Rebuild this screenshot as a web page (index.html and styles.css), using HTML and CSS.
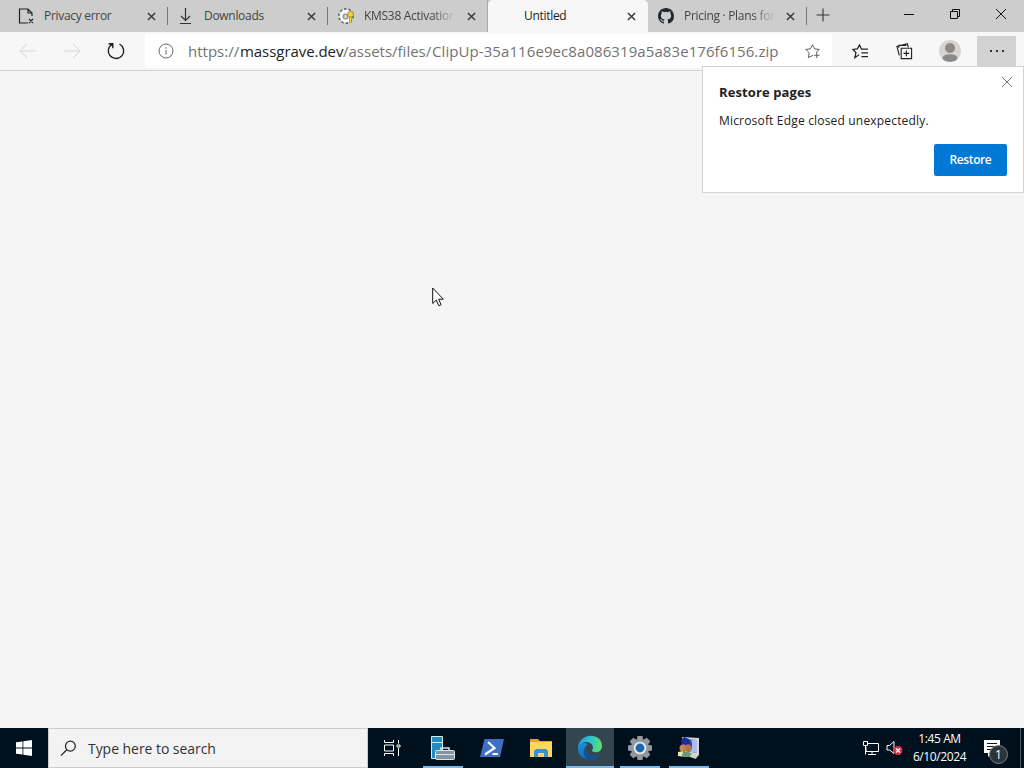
FILE: index.html
```html
<!DOCTYPE html>
<html lang="en">
<head>
    <meta charset="utf-8">
    <title>Untitled</title>
    <link rel="stylesheet" href="styles.css">
</head>
<body>
    <div class="tabs">
        <div class="tab">
            <svg class="fav" viewBox="0 0 16 16"><path d="M14 8V5L10 1H1.500v14H10M10 1v4h4M11 11l4 4M15 11l-4 4" fill="none" stroke="#222" stroke-width="1.200"/></svg>
            <span class="name">Privacy error</span>
            <svg class="x" viewBox="0 0 10 10"><path d="M1 1l8 8M9 1L1 9"/></svg>
        </div>
        <div class="tab">
            <svg class="fav" viewBox="0 0 16 16"><path d="M7.500 0v12M3 8l4.500 4.500L12 8M2 15.500h11" fill="none" stroke="#333" stroke-width="1.200"/></svg>
            <span class="name">Downloads</span>
            <svg class="x" viewBox="0 0 10 10"><path d="M1 1l8 8M9 1L1 9"/></svg>
        </div>
        <div class="tab">
            <svg class="fav" viewBox="0 0 16 16">
                <circle cx="8" cy="8" r="7" fill="#f5f5f5" stroke="#666" stroke-width="2" stroke-dasharray="2.400 2"/>
                <circle cx="8" cy="8" r="6.300" fill="#f7f7f7"/><circle cx="7.500" cy="8.500" r="2.500" fill="#cfcfcf" stroke="#777"/>
                <circle cx="12.500" cy="6.500" r="3" fill="#f4d03b" stroke="#8c6d16" stroke-width=".7"/><path d="M11.500 9h2v5l-1 1-1-1z" fill="#f4c93b" stroke="#8c6d16" stroke-width=".5"/>
            </svg>
            <span class="name fade">KMS38 Activation</span>
            <svg class="x" viewBox="0 0 10 10"><path d="M1 1l8 8M9 1L1 9"/></svg>
        </div>
        <div class="tab active">
            <span class="fav"></span>
            <span class="name">Untitled</span>
            <svg class="x" viewBox="0 0 10 10"><path d="M1 1l8 8M9 1L1 9"/></svg>
        </div>
        <div class="tab">
            <svg class="fav" viewBox="0 0 16 16"><path fill="#24292e" d="M8 0C3.580 0 0 3.580 0 8c0 3.540 2.290 6.530 5.470 7.590.4.070.55-.17.55-.38 0-.19-.01-.82-.01-1.490-2.010.37-2.530-.49-2.690-.94-.09-.23-.48-.94-.82-1.130-.28-.15-.68-.52-.01-.53.63-.01 1.080.58 1.230.82.72 1.210 1.870.87 2.330.66.070-.52.28-.87.51-1.070-1.780-.2-3.640-.89-3.640-3.950 0-.87.31-1.590.82-2.150-.08-.2-.36-1.020.08-2.120 0 0 .67-.21 2.200.82a7.600 7.600 0 0 1 4 0c1.530-1.040 2.200-.82 2.200-.82.44 1.100.16 1.920.08 2.120.51.56.82 1.270.82 2.150 0 3.070-1.870 3.750-3.650 3.950.29.25.54.73.54 1.480 0 1.070-.01 1.930-.01 2.200 0 .21.15.46.55.38A8 8 0 0 0 16 8c0-4.420-3.580-8-8-8z"/></svg>
            <span class="name fade">Pricing · Plans for</span>
            <svg class="x" viewBox="0 0 10 10"><path d="M1 1l8 8M9 1L1 9"/></svg>
        </div>
        <svg class="plus" viewBox="0 0 14 14"><path d="M7 .5v13M.5 7h13"/></svg>
        <div class="winbuttons">
            <svg viewBox="0 0 12 12"><path d="M1 6.500h10"/></svg>
            <svg viewBox="0 0 12 12"><path d="M1.500 3.500h7v7h-7zM3.500 3.500v-2h7v7h-2"/></svg>
            <svg viewBox="0 0 12 12"><path d="M1 1l10 10M11 1L1 11"/></svg>
        </div>
    </div>

    <div class="toolbar">
        <div class="nav">
            <svg class="off" viewBox="0 0 18 18"><path d="M17 9H1M8 2L1 9l7 7"/></svg>
            <svg class="off" viewBox="0 0 18 18"><path d="M1 9h16M10 2l7 7-7 7"/></svg>
            <svg viewBox="0 0 18 18"><path d="M12.500 2a7.700 7.700 0 1 1-7.200.1M1.500 1.800h4.300v4.400" stroke-width="1.400"/></svg>
        </div>
        <div class="address">
            <svg class="info" viewBox="0 0 16 16"><circle cx="8" cy="8" r="7"/><path d="M8 7v4.500M8 4.300v1.400"/></svg>
            <div class="url"><span class="scheme">https://</span><span class="host">massgrave.dev</span><span class="path">/assets/files/</span><span class="file">ClipUp-35a116e9ec8a086319a5a83e176f6156.zip</span></div>
            <svg class="star" viewBox="0 0 16 16"><path d="M8.500 12L3.500 14.500l1-5.200L.8 5.800l5-.6L8 .8l2.200 4.400 5 .6-3.500 3.300M12.500 9v6M9.500 12h6"/></svg>
        </div>
        <div class="actions">
            <svg viewBox="0 0 18 16"><path d="M7.500 11.500L3 14.500l1.200-5.200L1 5.800l4.700-.6L8 1l2 4.500h7M10 9.500h7M10 13.500h7" stroke-width="1.300"/></svg>
            <svg viewBox="0 0 18 18"><path d="M5.500 5.500h11v11h-11zM11 8v6M8 11h6M3.500 13L1 3.500l11-2.700 1 3.700M3 5V2.500h8" stroke-width="1.200"/></svg>
            <svg class="avatar" viewBox="0 0 22 22"><circle cx="11" cy="11" r="11" fill="#d6d4d2"/><circle cx="11" cy="8" r="5" fill="#8b8987"/><ellipse cx="11" cy="18" rx="7.500" ry="3.800" fill="#8b8987"/></svg>
            <div class="more"><svg viewBox="0 0 16 4"><path d="M1 1h2v2H1zM7 1h2v2H7zM13 1h2v2h-2z" fill="#333" stroke="none"/></svg></div>
        </div>
    </div>

    <div class="page">
        <div class="restore">
            <div class="title">Restore pages</div>
            <div class="text">Microsoft Edge closed unexpectedly.</div>
            <button>Restore</button>
            <svg class="dismiss" viewBox="0 0 12 12"><path d="M1 1l10 10M11 1L1 11"/></svg>
        </div>
        <svg class="cursor" viewBox="0 0 12 20"><path d="M.7 1v15.500l3.600-3.400 2.500 5.600 2.300-1-2.500-5.500h4.700z" fill="#fff" stroke="#111"/></svg>
    </div>

    <div class="taskbar">
        <div class="start"><svg viewBox="0 0 16 16"><path fill="#fff" d="M0 2.300L6.500 1.400v6.200H0zM7.300 1.300L16 0v7.600H7.300zM0 8.400h6.500v6.200L0 13.700zM7.300 8.400H16V16l-8.700-1.300z"/></svg></div>
        <div class="search">
            <svg viewBox="0 0 18 18"><circle cx="11" cy="6.500" r="5.200"/><path d="M7.200 10.300L1 16.500"/></svg>
            <span>Type here to search</span>
        </div>
        <div class="apps">
            <div class="app"><svg class="view" viewBox="0 0 18 16"><path d="M1.500 0v2.500h9V0M1.500 16v-2.500h9V16M1.500 5h9v6h-9zM15.500 0v3.500M15.500 8v8M14 5h3v2h-3z" fill="none" stroke="#fff"/></svg></div>
            <div class="app run"><svg viewBox="0 0 24 24"><path fill="#258bbd" stroke="#c8edfa" d="M.5.500h11v22H.5z"/><path d="M1 6.500h10" stroke="#c8edfa"/><path d="M10 15v-3h8v3" fill="none" stroke="#d8e2e8" stroke-width="1.500"/><rect x="4.500" y="14.500" width="19" height="9" rx="1" fill="#8295a2" stroke="#d8e2e8"/><path d="M5 18.500h18" stroke="#dce5e9"/></svg></div>
            <div class="app"><svg viewBox="0 0 24 24"><path fill="#3f6fc5" d="M4.500 3H24l-4 18H0z"/><path d="M8 6l6.500 6L5 18.500M12.500 18H18" fill="none" stroke="#fff" stroke-width="2.200"/></svg></div>
            <div class="app"><svg viewBox="0 0 24 24"><path fill="#e9a321" d="M1 3h8l2 2h12v4H1z"/><path fill="#ffd65e" d="M1 6h22v15H1z"/><path fill="#3794d2" d="M5 21v-6l2-2h10l2 2v6h-4v-4H9v4z"/></svg></div>
            <div class="app run current"><svg viewBox="0 0 24 24">
                <defs>
                    <linearGradient id="top" x1="0" y1=".4" x2="1" y2=".5"><stop offset="0" stop-color="#219bdd"/><stop offset=".55" stop-color="#31c7c8"/><stop offset="1" stop-color="#61df62"/></linearGradient>
                    <linearGradient id="side" x1="0" y1="0" x2=".5" y2="1"><stop offset="0" stop-color="#1c91dc"/><stop offset="1" stop-color="#1265b5"/></linearGradient>
                </defs>
                <path fill="url(#side)" d="M0 12C0 6 6 6 10 8c-4 3-3 9 2 11 4 1.700 8 .7 10-.5C17 26 0 26 0 12z"/>
                <path fill="#134f91" d="M9 10c-4 5 0 12 13 8.500-3 5-8 6-12 5C5 20 4 13 9 10z"/>
                <path fill="url(#top)" d="M0 12C1-4 24-4 24 10c0 6-6 7.500-9.500 5.500-1.500-1 .5-1.500.5-4C15 5 3 3 0 12z"/>
            </svg></div>
            <div class="app run"><svg viewBox="0 0 24 24"><g fill="#92989d"><circle cx="12" cy="12" r="9"/><path id="tooth" d="M9.500 0h5l1 5h-7z"/><use href="#tooth" transform="rotate(45 12 12)"/><use href="#tooth" transform="rotate(90 12 12)"/><use href="#tooth" transform="rotate(135 12 12)"/><use href="#tooth" transform="rotate(180 12 12)"/><use href="#tooth" transform="rotate(225 12 12)"/><use href="#tooth" transform="rotate(270 12 12)"/><use href="#tooth" transform="rotate(315 12 12)"/></g><circle cx="12" cy="12" r="6.300" fill="#e2e8eb"/><circle cx="12" cy="12" r="4.400" fill="#1769ac"/></svg></div>
            <div class="app run"><svg viewBox="0 0 24 24"><path fill="#d5d6cf" d="M5 1l17 1v17l-3 3-11-3z"/><path fill="#3448ae" d="M7 3l13 1v13L8 15z"/><path fill="#a9bdf0" d="M14 3.500l6 .5v13l-7-1c2-3 3-7 1-12.500z"/><path fill="#172e9b" d="M4 4l3-3 5 2 1 5-8 1z"/><circle cx="6" cy="12" r="3.500" fill="#c78750"/><circle cx="11" cy="12" r="3.500" fill="#b77445"/><path fill="#e8e6b0" d="M1 20v-4l5-1 2 6z"/><path fill="#6c9a79" d="M5 21v-3l5-3 5 3v3z"/><path fill="#cfd2c8" d="M14 18l6 2-1 3-6-2z"/></svg></div>
        </div>
        <div class="tray">
            <svg class="network" viewBox="0 0 18 16"><path d="M5 3.500h11.500v8H4V7M10 11.500v3M6 14.500h8M1.500 1.500h4v4h-4zM3.500 5.500v9" fill="none" stroke="#fff"/></svg>
            <svg class="sound" viewBox="0 0 18 16"><path d="M1 5.500h2.500L8 1.500v12L3.500 10H1z" fill="none" stroke="#fff"/><circle cx="12" cy="10.500" r="4.500" fill="#d92d3d"/><path d="M10 8.500l4 4M14 8.500l-4 4" stroke="#fff" stroke-width="1.300"/></svg>
            <div class="clock"><span>1:45 AM</span><span class="date">6/10/2024</span></div>
            <div class="notes">
                <svg viewBox="0 0 18 18"><path fill="#fff" d="M1 1h16v13H9l-4 4v-4H1z"/><path d="M4 4.500h10M4 7.500h10M4 10.500h7" stroke="#00101d"/></svg>
                <span class="badge">1</span>
            </div>
        </div>
    </div>
</body>
</html>
```
FILE: styles.css
```css
* {
    box-sizing: border-box;
}
body {
    margin: 0;
    width: 1024px;
    height: 768px;
    overflow: hidden;
    display: flex;
    flex-direction: column;
    background: #f5f5f5;
    font-family: "Open Sans", "Noto Sans", sans-serif;
    font-size: 12px;
    color: #222;
}
svg {
    display: block;
    flex: none;
    overflow: visible;
}
.tabs {
    height: 32px;
    padding-left: 8px;
    display: flex;
    background: #cdcdcd;
}
.tab {
    width: 160px;
    height: 32px;
    padding: 0 12px 0 10px;
    display: flex;
    align-items: center;
    color: #444;
    background: linear-gradient(#777, #777) right 7px/1px 18px no-repeat;
}
.tab:nth-child(3), .tab:nth-child(4) {
    background: none;
}
.tab:nth-child(3) {
    padding-right: 11px;
    border-right: 1px solid #aaa;
}
.tab:nth-child(5) {
    width: 159px;
}
.tab.active {
    background: #f7f7f7;
    border-radius: 5px 5px 0 0;
    color: #222;
}
.fav {
    width: 16px;
    height: 16px;
    flex: none;
}
.name {
    width: 91px;
    margin-left: 10px;
    padding-bottom: 1px;
    overflow: hidden;
    white-space: nowrap;
    letter-spacing: -0.3px;
}
.fade {
    -webkit-mask-image: linear-gradient(90deg, #000 75%, transparent);
    mask-image: linear-gradient(90deg, #000 75%, transparent);
}
.x {
    width: 9px;
    height: 9px;
    margin-left: auto;
    fill: none;
    stroke: #333;
    stroke-width: 1.5;
}
.plus {
    width: 14px;
    height: 14px;
    margin: 8px 0 0 9px;
    stroke: #333;
    stroke-width: 1.1;
}
.winbuttons {
    margin-left: auto;
    padding: 8px 17px 0 0;
    display: flex;
    gap: 34px;
}
.winbuttons svg {
    width: 12px;
    height: 12px;
    fill: none;
    stroke: #111;
}
.toolbar {
    height: 39px;
    display: flex;
    background: #f7f7f7;
    border-bottom: 1px solid #d2d2d2;
}
.toolbar svg {
    fill: none;
    stroke: #222;
}
.nav {
    width: 145px;
    height: 38px;
    padding-left: 19px;
    display: flex;
    align-items: center;
    gap: 26px;
}
.nav svg {
    width: 18px;
    height: 18px;
}
.toolbar .off {
    stroke: #d5d5d5;
}
.address {
    width: 687px;
    height: 34px;
    margin-top: 2px;
    padding: 0 12px 0 13px;
    display: flex;
    align-items: center;
    background: #fff;
}
.address .info {
    width: 16px;
    height: 16px;
    stroke: #666;
}
.address .star {
    width: 15px;
    height: 15px;
    margin-left: auto;
    stroke: #555;
}
.url {
    margin-left: 14px;
    width: 593px;
    display: flex;
    white-space: nowrap;
    font-size: 15px;
    line-height: 32px;
    color: #737373;
}
.scheme {
    width: 52px;
}
.host {
    width: 103px;
    letter-spacing: -0.05px;
    color: #222;
}
.path {
    width: 89px;
}
.file {
    letter-spacing: 0.08px;
}
.actions {
    flex: 1;
    display: flex;
    align-items: center;
    padding-left: 20px;
}
.actions > svg {
    width: 17px;
    height: 17px;
    margin-right: 27px;
}
.actions > .avatar {
    width: 22px;
    height: 22px;
    margin: 0 16px 0 -1px;
    stroke: none;
}
.more {
    width: 39px;
    height: 30px;
    background: #d2d2d2;
    display: flex;
    align-items: center;
    justify-content: center;
}
.more svg {
    width: 16px;
    height: 4px;
}
.page {
    position: relative;
    flex: 1;
}
/* drops down from the menu button, over the toolbar edge */
.restore {
    position: absolute;
    top: -5px;
    right: 0;
    width: 322px;
    height: 127px;
    padding: 15px 16px 16px;
    display: flex;
    flex-direction: column;
    background: #fff;
    border: 1px solid #d3d3d3;
}
.title {
    font-size: 13px;
    font-weight: 700;
    line-height: 20px;
    letter-spacing: 0.1px;
}
.text {
    margin-top: 9px;
    font-size: 12px;
    line-height: 20px;
    letter-spacing: 0.18px;
}
.restore button {
    width: 73px;
    height: 32px;
    margin: 13px 0 0;
    padding: 0 0 1px;
    align-self: flex-end;
    border: 0;
    border-radius: 2px;
    background: #0078d4;
    color: #fff;
    font: 600 12px "Open Sans", sans-serif;
    letter-spacing: -0.4px;
}
.dismiss {
    position: absolute;
    top: 9px;
    right: 10px;
    width: 12px;
    height: 12px;
    stroke: #777;
}
.cursor {
    position: absolute;
    left: 432px;
    top: 216px;
    width: 12px;
    height: 20px;
}
.taskbar {
    height: 40px;
    display: flex;
    background: #00101d;
    color: #fff;
}
.start {
    width: 48px;
    display: flex;
    align-items: center;
    justify-content: center;
}
.start svg {
    width: 16px;
    height: 16px;
}
.search {
    width: 320px;
    padding-left: 11px;
    display: flex;
    align-items: center;
    gap: 11px;
    background: #f3f3f3;
    border: 1px solid #ccc;
    color: #333;
    font-size: 14px;
    letter-spacing: -0.05px;
}
.search svg {
    width: 17px;
    height: 17px;
    fill: none;
    stroke: #222;
    stroke-width: 1.3;
}
.apps {
    display: flex;
}
.app {
    width: 49px;
    display: flex;
    align-items: center;
    justify-content: center;
}
.app:first-child {
    width: 50px;
    padding-right: 2px;
}
.app svg {
    width: 24px;
    height: 24px;
}
.app .view {
    width: 18px;
    height: 16px;
}
.run {
    background: linear-gradient(#76b9ed, #76b9ed) center bottom/40px 2px no-repeat;
}
.apps .current {
    width: 48px;
    margin-right: 1px;
    background: linear-gradient(#76b9ed, #76b9ed) center bottom/48px 2px no-repeat #344550;
}
.apps .app:nth-child(4) {
    width: 50px;
    padding-right: 1px;
}
.tray {
    margin-left: auto;
    display: flex;
    align-items: center;
}
.network {
    width: 18px;
    height: 16px;
    margin-right: 6px;
}
.sound {
    width: 18px;
    height: 16px;
}
.clock {
    width: 71px;
    display: flex;
    flex-direction: column;
    align-items: center;
    line-height: 18px;
    letter-spacing: -0.4px;
}
.notes {
    position: relative;
    width: 46px;
    height: 40px;
    padding: 11px 0 0 8px;
    border-right: 1px solid #4b5964;
    margin-right: 3px;
}
.notes svg {
    width: 18px;
    height: 18px;
}
.badge {
    position: absolute;
    left: 14px;
    top: 17px;
    width: 19px;
    height: 19px;
    border: 1px solid #788087;
    border-radius: 50%;
    background: #2d3439;
    font-size: 12px;
    line-height: 17px;
    text-align: center;
}
```
